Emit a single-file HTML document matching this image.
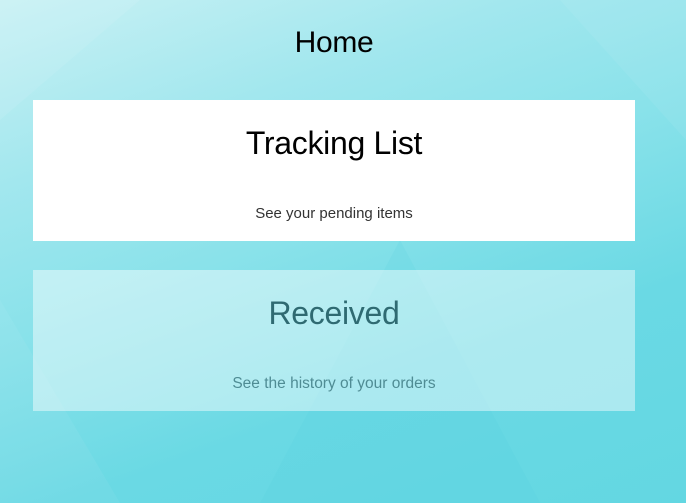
<!DOCTYPE html>
<html><head><style>
html,body{margin:0;padding:0;width:686px;height:503px;overflow:hidden}
body{font-family:"Liberation Sans",sans-serif;background:linear-gradient(160deg,#c9f1f4 0%,#a2e7ee 25%,#8ae2ea 45%,#6ad9e4 70%,#63d7e2 100%);position:relative}
.h{position:absolute;top:26px;left:0;width:668px;text-align:center;font-size:30px;color:#000;letter-spacing:-0.3px}
.card{position:absolute;left:33px;width:602px;height:141px;text-align:center}
.t{position:absolute;top:25px;left:0;width:100%;font-size:32px;letter-spacing:-0.3px}
.s{position:absolute;top:105px;left:0;width:100%;font-size:15px}
</style></head><body>
<svg width="686" height="503" style="position:absolute;left:0;top:0">
<polygon points="0,0 140,0 0,120" fill="#ffffff" opacity=".08"/>
<polygon points="400,240 540,503 260,503" fill="#4fcfdd" opacity=".15"/>
<polygon points="560,0 686,0 686,140" fill="#ffffff" opacity=".06"/>
<polygon points="0,300 120,503 0,503" fill="#ffffff" opacity=".05"/>
</svg>
<div class="h">Home</div>
<div class="card" style="top:100px;background:#fff">
<div class="t" style="color:#000">Tracking List</div>
<div class="s" style="color:#333">See your pending items</div>
</div>
<div class="card" style="top:270px;background:rgba(255,255,255,.45)">
<div class="t" style="color:#2f6a72">Received</div>
<div class="s" style="color:#4f8c94;font-size:15.5px">See the history of your orders</div>
</div>
</body></html>
